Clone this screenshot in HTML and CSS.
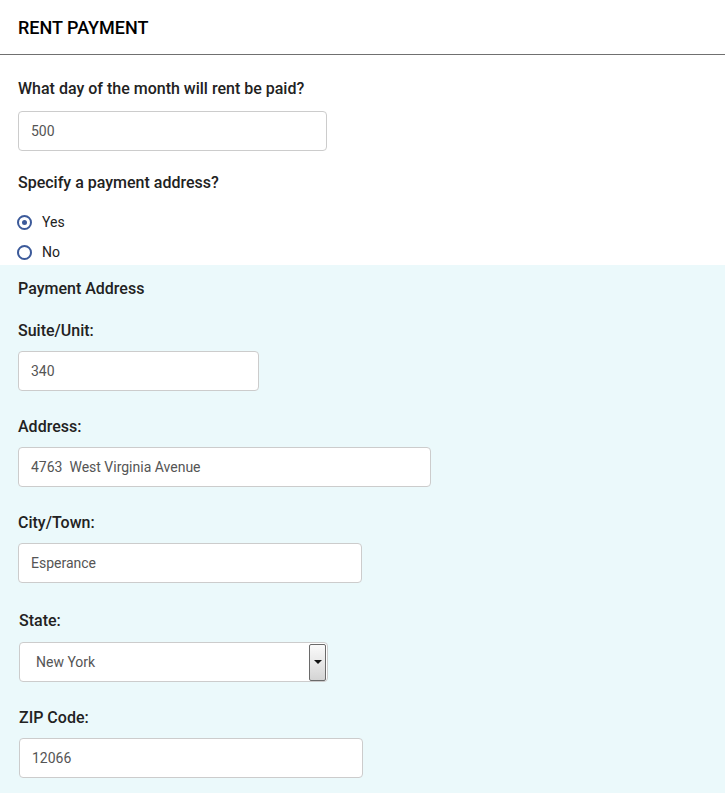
FILE: index.html
```html
<!DOCTYPE html>
<html lang="en">
<head>
<meta charset="utf-8">
<title>Rent Payment</title>
<link rel="stylesheet" href="styles.css">
</head>
<body>
<header class="panel-header">
  <h1 class="panel-title">RENT PAYMENT</h1>
</header>
<section class="section">
  <label class="q-label q-label--first">What day of the month will rent be paid?</label>
  <div class="input input--day">500</div>
  <div class="q-label q-label--second">Specify a payment address?</div>
  <div class="radio-list">
    <div class="radio-row"><span class="radio radio--checked"></span><span class="radio-text">Yes</span></div>
    <div class="radio-row"><span class="radio"></span><span class="radio-text">No</span></div>
  </div>
</section>
<section class="address">
  <div class="address-title">Payment Address</div>
  <div class="field">
    <div class="field-label">Suite/Unit:</div>
    <div class="input input--suite">340</div>
  </div>
  <div class="field">
    <div class="field-label">Address:</div>
    <div class="input input--address">4763&nbsp; West Virginia Avenue</div>
  </div>
  <div class="field">
    <div class="field-label">City/Town:</div>
    <div class="input input--city">Esperance</div>
  </div>
  <div class="field field--state">
    <div class="field-label">State:</div>
    <div class="select">
      <span class="select-value">New York</span>
      <span class="select-btn"><span class="select-arrow"></span></span>
    </div>
  </div>
  <div class="field field--zip">
    <div class="field-label">ZIP Code:</div>
    <div class="input input--zip">12066</div>
  </div>
</section>
</body>
</html>
```

FILE: styles.css
```css
* { box-sizing: border-box; }
html, body { margin: 0; padding: 0; }
body {
  font-family: Roboto, "Liberation Sans", Arial, sans-serif;
  color: #222;
  background: #fff;
  width: 725px;
  height: 793px;
  overflow: hidden;
}
.panel-header {
  height: 55px;
  border-bottom: 1px solid #707070;
  padding: 18px 18px 0;
}
.panel-title {
  margin: 0;
  font-size: 18px;
  line-height: 20px;
  font-weight: 500;
  color: #000;
}
.section {
  padding: 24px 18px 3px;
}
.q-label {
  display: block;
  font-size: 16px;
  line-height: 20px;
  font-weight: 500;
  color: #222;
}
.q-label--first { margin-bottom: 12px; }
.q-label--second { margin-top: 22px; margin-bottom: 19px; }
.input {
  height: 40px;
  border: 1px solid #ccc;
  border-radius: 4px;
  background: #fff;
  padding: 0 12px;
  font-size: 14px;
  line-height: 38px;
  color: #555;
  white-space: pre;
}
.input--day { width: 309px; }
.input--suite { width: 241px; }
.input--address { width: 413px; }
.input--city { width: 344px; }
.input--zip { width: 344px; }
.radio-list {
  display: flex;
  flex-direction: column;
  gap: 10px;
}
.radio-row {
  display: flex;
  align-items: center;
  height: 20px;
  gap: 10px;
}
.radio {
  width: 15px;
  height: 15px;
  border: 2px solid #3c5a9a;
  border-radius: 50%;
  display: flex;
  align-items: center;
  justify-content: center;
  margin-left: -1px;
}
.radio--checked::after {
  content: "";
  width: 5px;
  height: 5px;
  border-radius: 50%;
  background: #3c5a9a;
}
.radio-text {
  font-size: 14px;
  color: #222;
}
.address {
  background: #ebf9fb;
  padding: 14px 18px 20px;
  min-height: 528px;
}
.address-title {
  font-size: 16px;
  line-height: 20px;
  font-weight: 500;
  margin-bottom: 22px;
}
.field { margin-bottom: 26px; }
.field-label {
  font-size: 16px;
  line-height: 20px;
  font-weight: 500;
  margin-bottom: 10px;
}
.field--state { padding-top: 2px; margin-left: 1px; }
.field--state .field-label { margin-bottom: 11px; }
.field--zip { margin-left: 1px; }
.field--zip .field-label { margin-bottom: 10px; }
.select {
  width: 309px;
  height: 40px;
  border: 1px solid #ccc;
  border-radius: 4px;
  background: #fff;
  display: flex;
  align-items: center;
  padding-left: 16px;
  padding-right: 1px;
}
.select-value {
  flex: 1;
  font-size: 14px;
  color: #555;
}
.select-btn {
  width: 17px;
  height: 37px;
  border: 1px solid #6a6a6a;
  border-radius: 2px;
  background: linear-gradient(#fafafa, #e6e6e6 55%, #d4d4d4);
  display: flex;
  align-items: center;
  justify-content: center;
}
.select-arrow {
  width: 0;
  height: 0;
  border-left: 4px solid transparent;
  border-right: 4px solid transparent;
  border-top: 4px solid #111;
}
```
